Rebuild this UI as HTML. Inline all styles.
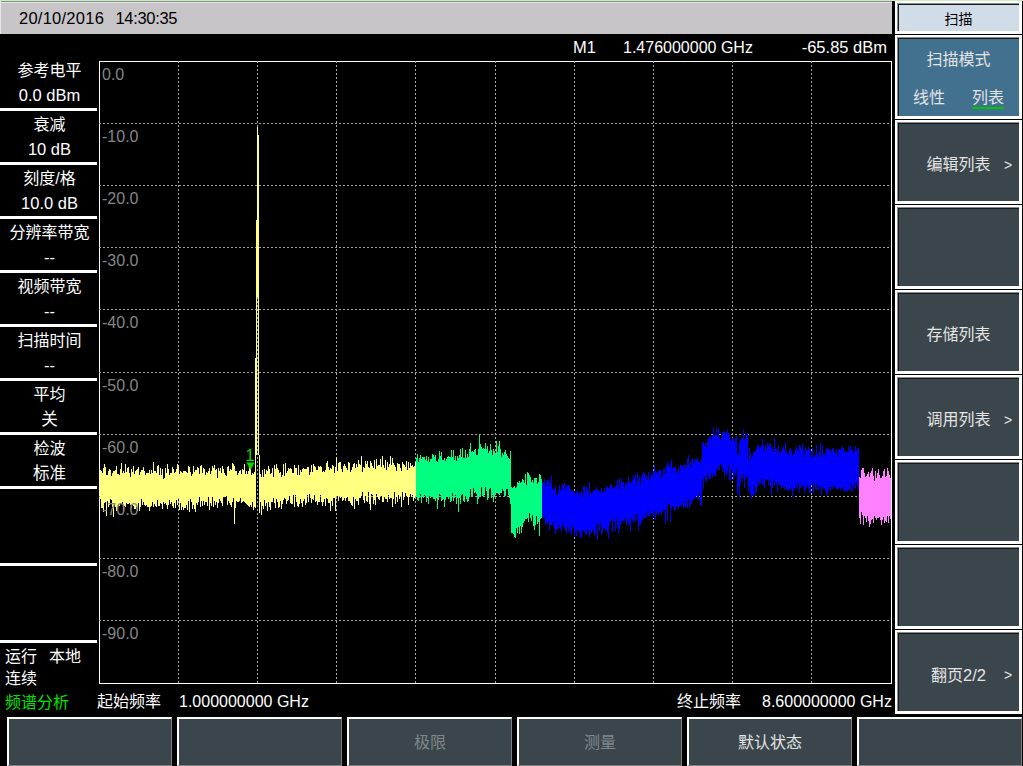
<!DOCTYPE html>
<html lang="zh-CN">
<head>
<meta charset="utf-8">
<title>频谱分析</title>
<style>
html,body{margin:0;padding:0;background:#000;}
body{width:1023px;height:766px;overflow:hidden;position:relative;
 font-family:"Liberation Sans","Noto Sans CJK SC",sans-serif;font-size:16px;color:#fff;}
#root{position:absolute;left:0;top:0;width:1023px;height:766px;background:#000;overflow:hidden;}
#topline{position:absolute;left:0;top:0;width:1023px;height:1px;background:#c8ecc4;}
#topl2{position:absolute;left:0;top:1px;width:892px;height:1px;background:#8c8c8c;}
#topl3{position:absolute;left:0;top:2px;width:892px;height:1px;background:#e4e4e4;}
#topbar{position:absolute;left:1px;top:1px;width:891px;height:33px;background:#c8c5c8;}
#edge{position:absolute;left:0;top:1px;width:1px;height:33px;background:#e8e8e8;}
#clock{position:absolute;left:19px;top:8px;line-height:20px;color:#000;white-space:pre;font-size:16.5px;}
.t{position:absolute;line-height:20px;white-space:pre;}
.n{font-size:16.5px;}
.lt{position:absolute;left:1px;width:97px;text-align:center;line-height:24px;height:24px;white-space:pre;}
.ld{position:absolute;left:0;width:97px;height:3px;background:#fff;}
.yl{position:absolute;left:102px;line-height:20px;color:#868686;white-space:pre;}
#plot{position:absolute;left:0;top:0;}
.rb{position:absolute;left:895px;width:121px;height:78px;background:#3b464c;
 border:3px solid #fff;border-top-width:3px;box-shadow:inset 1px 1px 0 #15191c;color:#e4e4e4;}
.rb.sel{background:#42708f;}
.rb::before,#rtitle::before{content:"";position:absolute;left:-1px;top:-1px;right:0;bottom:0;border-left:1px solid #8c8c8c;border-top:1px solid #8c8c8c;pointer-events:none;}
.rb .c{position:absolute;left:0;width:121px;text-align:center;line-height:24px;white-space:pre;}
.rb .gt{position:absolute;left:106px;line-height:24px;font-size:14px;}
.rb .o{position:absolute;line-height:24px;}
.rb .o.on{border-bottom:2px solid #00c800;line-height:24px;height:21px;}
#rtitle{position:absolute;left:895px;top:1px;width:121px;height:27px;background:#d0dce8;border:3px solid #fff;
 box-shadow:inset 1px 1px 0 #15191c;color:#000;text-align:center;line-height:31px;font-size:14px;}
.bb{position:absolute;top:717px;width:162px;height:46px;background:#3b464c;border-left:2px solid #fff;border-top:2px solid #fff;
 border-right:1px solid #808080;border-bottom:1px solid #808080;text-align:center;line-height:48px;color:#e4e4e4;}
.bb .dis{color:#7f878b;}
</style>
</head>
<body>
<div id="root">
<div id="topline"></div>
<div id="topbar"></div>
<div id="topl2"></div><div id="topl3"></div>
<div id="edge"></div>
<div id="clock"><span style="letter-spacing:0.25px">20/10/2016</span><span style="position:absolute;left:96.5px;letter-spacing:-0.33px">14:30:35</span></div>

<div class="t n" style="left:573px;top:37px">M1</div>
<div class="t" style="left:623px;top:38px">1.476000000 GHz</div>
<div class="t n" style="right:136px;top:37px">-65.85 dBm</div>

<div class="lt" style="top:59px">参考电平</div><div class="lt n" style="top:83px">0.0 dBm</div><div class="lt" style="top:113px">衰减</div><div class="lt n" style="top:137px">10 dB</div><div class="lt" style="top:167px">刻度/格</div><div class="lt n" style="top:191px">10.0 dB</div><div class="lt" style="top:221px">分辨率带宽</div><div class="lt n" style="top:245px">--</div><div class="lt" style="top:275px">视频带宽</div><div class="lt n" style="top:299px">--</div><div class="lt" style="top:329px">扫描时间</div><div class="lt n" style="top:353px">--</div><div class="lt" style="top:383px">平均</div><div class="lt n" style="top:407px">关</div><div class="lt" style="top:437px">检波</div><div class="lt n" style="top:461px">标准</div><div class="ld" style="top:108px"></div><div class="ld" style="top:162px"></div><div class="ld" style="top:216px"></div><div class="ld" style="top:270px"></div><div class="ld" style="top:324px"></div><div class="ld" style="top:378px"></div><div class="ld" style="top:432px"></div><div class="ld" style="top:486px"></div><div class="ld" style="top:563px"></div><div class="ld" style="top:640px"></div>

<div class="t" style="left:5px;top:647px;word-spacing:1.5px">运行  本地</div>
<div class="t" style="left:5px;top:669px">连续</div>
<div class="t" style="left:5px;top:693px;color:#00e000">频谱分析</div>
<div class="t" style="left:97px;top:692px">起始频率</div>
<div class="t" style="left:179px;top:692px">1.000000000 GHz</div>
<div class="t" style="left:677px;top:692px">终止频率</div>
<div class="t" style="left:762px;top:692px">8.600000000 GHz</div>

<svg id="plot" width="1023" height="766" viewBox="0 0 1023 766" shape-rendering="crispEdges">
<rect x="99.5" y="61.5" width="792" height="622" fill="#000" stroke="#fff" stroke-width="1"/>
<path d="M178.5 61V683M257.5 61V683M336.5 61V683M415.5 61V683M495.5 61V683M574.5 61V683M653.5 61V683M732.5 61V683M811.5 61V683M99 123.5H891M99 185.5H891M99 247.5H891M99 309.5H891M99 372.5H891M99 434.5H891M99 496.5H891M99 558.5H891M99 620.5H891" stroke="#a4a4a4" stroke-width="1" stroke-dasharray="2 2" fill="none"/>
<path d="M100.5 470V499M101.5 471V508M102.5 473V508M103.5 468V512M104.5 464V503M105.5 467V502M106.5 475V516M107.5 475V501M108.5 471V507M109.5 469V505M110.5 470V499M111.5 476V500M112.5 473V507M113.5 471V517M114.5 471V503M115.5 470V507M116.5 466V511M117.5 474V509M118.5 474V505M119.5 475V506M120.5 469V503M121.5 463V504M122.5 473V502M123.5 471V511M124.5 473V506M125.5 464V507M126.5 472V503M127.5 468V504M128.5 467V504M129.5 473V503M130.5 477V505M131.5 469V508M132.5 472V505M133.5 466V506M134.5 474V509M135.5 471V509M136.5 470V507M137.5 469V511M138.5 467V503M139.5 475V511M140.5 472V507M141.5 470V499M142.5 470V505M143.5 467V502M144.5 471V505M145.5 475V506M146.5 473V505M147.5 473V507M148.5 473V507M149.5 470V511M150.5 474V507M151.5 470V506M152.5 473V502M153.5 462V507M154.5 471V504M155.5 471V506M156.5 473V507M157.5 466V500M158.5 465V506M159.5 475V506M160.5 468V503M161.5 475V504M162.5 469V509M163.5 479V502M164.5 478V504M165.5 468V503M166.5 473V505M167.5 464V509M168.5 469V505M169.5 475V500M170.5 473V504M171.5 473V502M172.5 467V506M173.5 469V508M174.5 473V503M175.5 472V508M176.5 469V500M177.5 464V505M178.5 465V498M179.5 474V510M180.5 471V503M181.5 472V510M182.5 473V507M183.5 471V510M184.5 471V508M185.5 471V508M186.5 472V505M187.5 473V510M188.5 466V501M189.5 467V512M190.5 472V499M191.5 476V502M192.5 474V509M193.5 466V505M194.5 472V509M195.5 470V512M196.5 470V503M197.5 467V505M198.5 468V502M199.5 474V497M200.5 466V507M201.5 465V501M202.5 473V506M203.5 468V501M204.5 469V505M205.5 475V502M206.5 472V502M207.5 473V506M208.5 471V497M209.5 468V510M210.5 474V503M211.5 471V506M212.5 466V497M213.5 468V507M214.5 465V501M215.5 470V505M216.5 469V502M217.5 478V508M218.5 468V503M219.5 471V499M220.5 468V501M221.5 473V503M222.5 466V506M223.5 469V497M224.5 473V497M225.5 475V497M226.5 476V496M227.5 467V505M228.5 466V501M229.5 471V503M230.5 469V505M231.5 470V507M232.5 463V502M233.5 464V498M234.5 466V524M235.5 471V508M236.5 471V501M237.5 475V502M238.5 473V502M239.5 471V501M240.5 470V498M241.5 474V503M242.5 469V502M243.5 470V501M244.5 464V502M245.5 474V503M246.5 471V504M247.5 474V505M248.5 471V506M249.5 465V507M250.5 467V505M251.5 475V507M252.5 473V502M253.5 474V510M254.5 472V507M255.5 470V508M258.5 472V506M259.5 473V513M260.5 474V502M261.5 477V515M262.5 470V506M263.5 477V509M264.5 469V500M265.5 474V506M266.5 470V503M267.5 471V511M268.5 466V502M269.5 469V507M270.5 474V510M271.5 473V502M272.5 468V502M273.5 477V498M274.5 465V503M275.5 469V508M276.5 464V499M277.5 468V502M278.5 470V508M279.5 473V507M280.5 472V501M281.5 477V509M282.5 475V504M283.5 464V500M284.5 476V498M285.5 463V499M286.5 473V504M287.5 471V501M288.5 468V500M289.5 469V496M290.5 468V503M291.5 469V504M292.5 473V504M293.5 473V495M294.5 465V507M295.5 468V495M296.5 468V502M297.5 475V506M298.5 465V507M299.5 475V504M300.5 470V499M301.5 472V503M302.5 469V507M303.5 468V501M304.5 469V499M305.5 469V505M306.5 469V503M307.5 467V495M308.5 467V502M309.5 475V494M310.5 472V498M311.5 465V503M312.5 472V499M313.5 464V500M314.5 466V495M315.5 467V502M316.5 470V501M317.5 470V505M318.5 466V502M319.5 467V502M320.5 466V495M321.5 467V502M322.5 472V506M323.5 471V502M324.5 472V499M325.5 470V506M326.5 463V498M327.5 461V499M328.5 467V503M329.5 470V503M330.5 468V511M331.5 469V501M332.5 465V506M333.5 466V498M334.5 473V498M335.5 467V511M336.5 457V496M337.5 471V496M338.5 463V501M339.5 462V496M340.5 462V498M341.5 469V497M342.5 472V501M343.5 466V500M344.5 464V498M345.5 466V501M346.5 468V498M347.5 470V497M348.5 462V501M349.5 463V501M350.5 472V503M351.5 470V505M352.5 467V506M353.5 464V497M354.5 463V509M355.5 468V499M356.5 464V501M357.5 467V501M358.5 460V505M359.5 464V498M360.5 465V498M361.5 456V496M362.5 472V492M363.5 467V500M364.5 468V503M365.5 461V496M366.5 464V501M367.5 461V502M368.5 467V492M369.5 468V504M370.5 461V510M371.5 463V494M372.5 466V495M373.5 468V504M374.5 460V500M375.5 469V505M376.5 459V494M377.5 466V497M378.5 465V499M379.5 465V500M380.5 459V496M381.5 467V496M382.5 456V502M383.5 465V502M384.5 468V497M385.5 460V499M386.5 470V499M387.5 462V502M388.5 467V495M389.5 464V499M390.5 456V498M391.5 465V498M392.5 458V507M393.5 463V499M394.5 465V492M395.5 467V504M396.5 471V497M397.5 463V502M398.5 464V495M399.5 464V499M400.5 468V496M401.5 471V507M402.5 462V492M403.5 464V500M404.5 465V497M405.5 467V493M406.5 461V496M407.5 470V497M408.5 462V505M409.5 468V497M410.5 463V494M411.5 466V497M412.5 465V495M413.5 467V501M414.5 466V498M415.5 462V496" stroke="#ffff80" stroke-width="1" fill="none"/><path d="M416.5 458V497M417.5 454V500M418.5 462V501M419.5 458V498M420.5 455V494M421.5 459V503M422.5 457V497M423.5 457V498M424.5 457V495M425.5 460V496M426.5 456V502M427.5 461V498M428.5 457V504M429.5 462V496M430.5 459V498M431.5 459V497M432.5 454V496M433.5 455V499M434.5 457V499M435.5 455V501M436.5 461V498M437.5 462V509M438.5 459V500M439.5 451V494M440.5 456V495M441.5 452V501M442.5 460V500M443.5 460V499M444.5 458V507M445.5 461V500M446.5 459V497M447.5 457V497M448.5 456V499M449.5 457V497M450.5 457V502M451.5 450V501M452.5 457V493M453.5 450V501M454.5 460V498M455.5 456V495M456.5 461V504M457.5 456V498M458.5 458V512M459.5 455V498M460.5 449V504M461.5 457V495M462.5 448V494M463.5 458V501M464.5 458V502M465.5 450V496M466.5 458V499M467.5 454V502M468.5 457V501M469.5 449V497M470.5 443V489M471.5 452V497M472.5 451V496M473.5 452V488M474.5 450V493M475.5 449V492M476.5 455V494M477.5 455V504M478.5 449V499M479.5 440V496M480.5 444V496M481.5 447V487M482.5 449V496M483.5 448V497M484.5 449V495M485.5 443V487M486.5 449V491M487.5 446V500M488.5 453V498M489.5 451V489M490.5 444V488M491.5 450V498M492.5 455V495M493.5 449V502M494.5 451V497M495.5 455V493M496.5 441V493M497.5 452V493M498.5 446V494M499.5 441V495M500.5 449V493M501.5 457V493M502.5 453V489M503.5 455V491M504.5 452V496M505.5 450V496M506.5 454V489M507.5 456V489M508.5 458V495M509.5 459V498M510.5 451V504M511.5 487V533M512.5 488V533M513.5 487V534M514.5 486V537M515.5 488V538M516.5 487V528M517.5 482V533M518.5 483V527M519.5 481V534M520.5 483V526M521.5 482V533M522.5 479V527M523.5 480V523M524.5 483V521M525.5 474V519M526.5 485V519M527.5 472V518M528.5 473V522M529.5 475V513M530.5 477V518M531.5 482V521M532.5 480V515M533.5 483V526M534.5 478V530M535.5 478V525M536.5 478V516M537.5 484V524M538.5 482V522M539.5 474V536M540.5 475V519M541.5 479V518M479.5 434V470" stroke="#00ff80" stroke-width="1" fill="none"/><path d="M542.5 482V517M543.5 483V517M544.5 479V518M545.5 486V525M546.5 482V522M547.5 480V524M548.5 486V522M549.5 479V530M550.5 483V525M551.5 476V525M552.5 489V522M553.5 490V526M554.5 489V529M555.5 486V534M556.5 495V530M557.5 495V529M558.5 491V525M559.5 485V528M560.5 490V529M561.5 489V532M562.5 484V523M563.5 485V526M564.5 483V528M565.5 489V531M566.5 485V534M567.5 487V527M568.5 485V532M569.5 485V527M570.5 491V532M571.5 490V535M572.5 490V526M573.5 492V528M574.5 492V537M575.5 495V532M576.5 492V536M577.5 490V530M578.5 495V530M579.5 492V532M580.5 494V537M581.5 491V538M582.5 498V530M583.5 486V531M584.5 486V532M585.5 492V535M586.5 487V534M587.5 489V530M588.5 495V530M589.5 482V537M590.5 492V534M591.5 494V533M592.5 491V531M593.5 492V529M594.5 490V535M595.5 490V533M596.5 487V524M597.5 490V540M598.5 490V524M599.5 492V531M600.5 493V523M601.5 488V535M602.5 492V533M603.5 491V528M604.5 488V528M605.5 492V530M606.5 486V530M607.5 487V533M608.5 489V539M609.5 487V525M610.5 484V522M611.5 485V519M612.5 489V532M613.5 487V519M614.5 487V522M615.5 487V531M616.5 485V518M617.5 480V527M618.5 489V534M619.5 479V529M620.5 485V525M621.5 478V521M622.5 482V521M623.5 482V521M624.5 489V518M625.5 484V522M626.5 483V525M627.5 482V519M628.5 477V524M629.5 482V525M630.5 485V532M631.5 482V518M632.5 480V520M633.5 475V523M634.5 479V521M635.5 474V515M636.5 485V521M637.5 473V514M638.5 481V530M639.5 476V525M640.5 484V525M641.5 477V522M642.5 475V520M643.5 472V517M644.5 473V518M645.5 476V518M646.5 475V511M647.5 480V517M648.5 472V516M649.5 480V516M650.5 477V513M651.5 473V514M652.5 477V513M653.5 471V518M654.5 465V511M655.5 471V520M656.5 473V515M657.5 472V511M658.5 470V514M659.5 471V513M660.5 470V512M661.5 478V515M662.5 476V512M663.5 469V510M664.5 468V510M665.5 473V524M666.5 466V507M667.5 462V521M668.5 465V504M669.5 468V504M670.5 463V522M671.5 460V508M672.5 468V506M673.5 468V507M674.5 468V511M675.5 466V509M676.5 471V507M677.5 473V506M678.5 467V509M679.5 473V506M680.5 465V505M681.5 465V506M682.5 467V502M683.5 465V508M684.5 469V506M685.5 464V508M686.5 467V501M687.5 459V508M688.5 455V500M689.5 465V509M690.5 461V505M691.5 467V504M692.5 458V500M693.5 461V500M694.5 463V499M695.5 459V497M696.5 460V496M697.5 457V499M698.5 462V500M699.5 462V493M700.5 463V506M701.5 459V505M702.5 442V479M703.5 442V489M704.5 446V476M705.5 443V481M706.5 447V482M707.5 441V474M708.5 438V477M709.5 437V479M710.5 436V479M711.5 439V473M712.5 437V477M713.5 427V474M714.5 436V476M715.5 433V476M716.5 428V469M717.5 436V471M718.5 428V466M719.5 437V470M720.5 440V465M721.5 438V464M722.5 432V471M723.5 432V469M724.5 431V477M725.5 435V472M726.5 432V475M727.5 430V471M728.5 433V465M729.5 435V480M730.5 441V481M731.5 439V469M732.5 438V472M733.5 439V480M734.5 442V473M735.5 439V476M736.5 436V469M737.5 454V494M738.5 455V487M739.5 443V497M740.5 439V483M741.5 438V475M742.5 439V479M743.5 429V474M744.5 439V488M745.5 439V480M746.5 434V477M747.5 433V477M748.5 460V492M749.5 448V487M750.5 453V494M751.5 459V499M752.5 456V495M753.5 452V496M754.5 451V486M755.5 452V495M756.5 449V492M757.5 445V487M758.5 445V481M759.5 447V485M760.5 448V484M761.5 445V478M762.5 439V485M763.5 446V485M764.5 452V489M765.5 446V480M766.5 449V479M767.5 443V480M768.5 446V485M769.5 443V479M770.5 444V486M771.5 447V495M772.5 452V488M773.5 449V481M774.5 438V486M775.5 449V481M776.5 449V484M777.5 451V492M778.5 445V482M779.5 455V485M780.5 452V486M781.5 451V489M782.5 448V486M783.5 447V488M784.5 451V490M785.5 442V486M786.5 452V490M787.5 453V489M788.5 455V491M789.5 449V489M790.5 448V488M791.5 451V490M792.5 456V497M793.5 453V491M794.5 454V489M795.5 449V488M796.5 447V485M797.5 450V489M798.5 451V483M799.5 445V493M800.5 446V488M801.5 449V485M802.5 444V487M803.5 450V486M804.5 457V493M805.5 447V490M806.5 450V485M807.5 450V487M808.5 447V488M809.5 449V493M810.5 457V493M811.5 451V485M812.5 448V483M813.5 457V493M814.5 457V484M815.5 455V489M816.5 445V490M817.5 453V484M818.5 457V490M819.5 451V487M820.5 443V486M821.5 457V495M822.5 446V489M823.5 454V488M824.5 453V488M825.5 456V491M826.5 449V494M827.5 449V495M828.5 449V491M829.5 449V487M830.5 453V491M831.5 450V487M832.5 449V489M833.5 448V485M834.5 452V487M835.5 453V487M836.5 449V489M837.5 457V489M838.5 450V489M839.5 449V488M840.5 450V490M841.5 448V488M842.5 446V486M843.5 448V491M844.5 451V491M845.5 453V491M846.5 452V492M847.5 452V491M848.5 446V490M849.5 451V489M850.5 446V491M851.5 449V484M852.5 451V491M853.5 453V487M854.5 451V483M855.5 446V489M856.5 451V482M857.5 448V487M858.5 448V490" stroke="#0000ff" stroke-width="1" fill="none"/><path d="M859.5 477V518M860.5 478V524M861.5 470V512M862.5 468V515M863.5 468V525M864.5 473V516M865.5 477V518M866.5 476V522M867.5 474V516M868.5 472V521M869.5 477V527M870.5 473V524M871.5 471V520M872.5 468V519M873.5 476V523M874.5 481V516M875.5 471V518M876.5 478V520M877.5 473V518M878.5 469V518M879.5 475V517M880.5 478V520M881.5 478V525M882.5 476V520M883.5 471V517M884.5 469V523M885.5 477V521M886.5 476V522M887.5 468V516M888.5 471V523M889.5 475V516M890.5 478V519" stroke="#ff80ff" stroke-width="1" fill="none"/>
<rect x="257" y="297" width="1" height="160" fill="#000"/><rect x="256" y="455" width="3" height="85" fill="#000"/>
<path d="M257.5 297V540" stroke="#a4a4a4" stroke-width="1" stroke-dasharray="2 2" fill="none"/>
<path d="M255.5 358V505M256.5 220V455M257.5 127V297M258.5 135V455M259.5 455V505" stroke="#ffff80" stroke-width="1" fill="none"/>
<path d="M246.5 462.5H254.5L250.5 470Z" fill="#00dc00" shape-rendering="auto"/>
<rect x="247" y="460" width="7" height="1" fill="#00dc00"/>
<text x="245.5" y="461" font-family="Liberation Sans, sans-serif" font-size="16" fill="#00dc00" shape-rendering="auto">1</text>
</svg>
<div class="yl" style="top:65px">0.0</div><div class="yl" style="top:127px">-10.0</div><div class="yl" style="top:189px">-20.0</div><div class="yl" style="top:251px">-30.0</div><div class="yl" style="top:313px">-40.0</div><div class="yl" style="top:376px">-50.0</div><div class="yl" style="top:438px">-60.0</div><div class="yl" style="top:500px">-70.0</div><div class="yl" style="top:562px">-80.0</div><div class="yl" style="top:624px">-90.0</div>

<div id="rtitle">扫描</div>
<div class="rb sel" style="top:35px"><span class="c" style="top:10px">扫描模式</span><span class="o" style="left:15px;top:48px">线性</span><span class="o on" style="left:74px;top:48px">列表</span></div><div class="rb" style="top:120px"><span class="c" style="top:29.5px">编辑列表</span><span class="gt" style="top:29.5px">&gt;</span></div><div class="rb" style="top:205px"></div><div class="rb" style="top:290px"><span class="c" style="top:29.5px">存储列表</span></div><div class="rb" style="top:375px"><span class="c" style="top:29.5px">调用列表</span><span class="gt" style="top:29.5px">&gt;</span></div><div class="rb" style="top:460px"></div><div class="rb" style="top:545px"></div><div class="rb" style="top:630px"><span class="c" style="top:29.5px">翻页<span class="n">2/2</span></span><span class="gt" style="top:29.5px">&gt;</span></div>
<div class="bb" style="left:7px"></div><div class="bb" style="left:177px"></div><div class="bb" style="left:347px"><span class="dis">极限</span></div><div class="bb" style="left:517px"><span class="dis">测量</span></div><div class="bb" style="left:687px"><span>默认状态</span></div><div class="bb" style="left:857px"></div>
</div>
</body>
</html>
